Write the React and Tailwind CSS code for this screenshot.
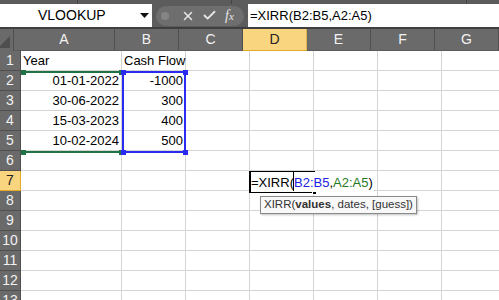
import { X, Check } from 'lucide-react';

const COLS = ['A', 'B', 'C', 'D', 'E', 'F', 'G'];
const COL_W = [101, 64, 64, 64, 64, 64, 64];

const DATA = {
  1: { A: { v: 'Year' }, B: { v: 'Cash Flow' } },
  2: { A: { v: '01-01-2022', right: true }, B: { v: '-1000', right: true } },
  3: { A: { v: '30-06-2022', right: true }, B: { v: '300', right: true } },
  4: { A: { v: '15-03-2023', right: true }, B: { v: '400', right: true } },
  5: { A: { v: '10-02-2024', right: true }, B: { v: '500', right: true } },
};

const ROWS = Array.from({ length: 13 }, (_, i) => i + 1);

function Corner({ color, x, y }) {
  return <div className={`absolute h-[5px] w-[5px] ${color}`} style={{ left: x - 2, top: y - 2 }} />;
}

export default function App() {
  return (
    <div
      className="relative h-[300px] w-[499px] overflow-hidden bg-white text-[13px] text-black"
      style={{ fontFamily: '"Liberation Sans", Arial, sans-serif' }}
    >
      {/* ribbon edge */}
      <div className="flex h-[4px] bg-[#5c5c5c]">
        <div className="w-[78px] border-r border-[#444]" />
        <div className="w-[154px] border-r border-[#444]" />
        <div className="w-[235px] border-r border-[#444]" />
      </div>

      {/* formula bar */}
      <div className="flex h-[23px] bg-[#5c5c5c]">
        <div className="flex w-[152px] items-center bg-white pl-[38px] pr-[2px]">
          <span className="flex-1 text-[14px]">VLOOKUP</span>
          <svg width="9" height="5" viewBox="0 0 9 5" className="mr-[1px]">
            <path d="M0 0h9L4.5 5z" fill="#111" />
          </svg>
        </div>
        <div className="flex flex-1 items-center">
          <div className="ml-[4px] flex h-[20px] w-[88px] items-center rounded-full bg-[#6e6e6e] pl-[5px]">
            <div className="h-[8px] w-[8px] rounded-full bg-[#858585]" />
            <X className="ml-[12px] h-[14px] w-[14px] text-[#e6e6e6]" strokeWidth={2.5} />
            <Check className="ml-[7px] h-[15px] w-[15px] text-[#e6e6e6]" strokeWidth={3} />
            <span
              className="ml-[8px] text-[14px] italic text-[#e6e6e6]"
              style={{ fontFamily: '"Liberation Serif", serif' }}
            >
              f<span className="text-[11px]">x</span>
            </span>
          </div>
        </div>
        <div className="flex w-[251px] items-center bg-white pl-[2px]">
          <span>=XIRR(B2:B5,A2:A5)</span>
        </div>
      </div>
      <div className="h-[2px] bg-[#3f3f3f]" />

      {/* column headers */}
      <div className="flex h-[22px] bg-[#6a6a6a] text-[14px] text-[#f2f2f2]">
        <div className="relative w-[21px] border-r border-[#4f4f4f]">
          <svg width="12" height="12" viewBox="0 0 12 12" className="absolute bottom-[3px] right-[3px]">
            <path d="M12 0V12H0z" fill="#4e4e4e" />
          </svg>
        </div>
        {COLS.map((c, i) => (
          <div
            key={c}
            className={`flex shrink-0 items-center justify-center border-r border-b ${
              c === 'D'
                ? 'border-[#e1b34f] border-b-[#e3a92b] bg-[#fad57f] text-[#222]'
                : 'border-[#4f4f4f] border-b-[#5a5a5a]'
            }`}
            style={{ width: COL_W[i] }}
          >
            {c}
          </div>
        ))}
      </div>

      {/* rows */}
      {ROWS.map((r) => (
        <div key={r} className="flex h-[20px]">
          <div
            className={`flex w-[21px] shrink-0 items-center justify-center border-r border-b text-[14px] ${
              r === 7
                ? 'border-[#e3a92b] bg-[#fad57f] text-[#222]'
                : 'border-[#4f4f4f] bg-[#6a6a6a] text-[#f2f2f2]'
            }`}
          >
            {r}
          </div>
          {COLS.map((c, i) => {
            const cell = DATA[r]?.[c];
            return (
              <div
                key={c}
                className={`flex shrink-0 items-center overflow-visible whitespace-nowrap border-r border-b border-[#d4d4d4] px-[2px] pt-[1px] ${
                  cell?.right ? 'justify-end' : 'justify-start'
                }`}
                style={{ width: COL_W[i] }}
              >
                {cell?.v}
              </div>
            );
          })}
        </div>
      ))}

      {/* A2:A5 green range */}
      <div className="absolute left-[22px] top-[71px] h-[2px] w-[100px] bg-[#217346]" />
      <div className="absolute left-[22px] top-[151px] h-[2px] w-[100px] bg-[#217346]" />
      <Corner color="bg-[#217346]" x={23} y={72} />
      <Corner color="bg-[#217346]" x={23} y={152} />
      <Corner color="bg-[#217346]" x={121} y={72} />
      <Corner color="bg-[#217346]" x={121} y={152} />

      {/* B2:B5 blue range */}
      <div className="absolute left-[122px] top-[71px] h-[82px] w-[64px] border-2 border-[#2a2af0]" />
      <Corner color="bg-[#2a2af0]" x={123} y={72} />
      <Corner color="bg-[#2a2af0]" x={185} y={72} />
      <Corner color="bg-[#2a2af0]" x={123} y={152} />
      <Corner color="bg-[#2a2af0]" x={185} y={152} />

      {/* active cell D7 */}
      <div className="absolute left-[249px] top-[171px] h-[22px] w-[66px] border-2 border-black" />
      <div className="absolute left-[312px] top-[190px] h-[5px] w-[5px] border border-white bg-black" />
      <div className="absolute left-[251px] top-[172px] flex h-[20px] items-center whitespace-nowrap bg-white pr-[1px] pt-[1px]">
        <span>=XIRR(</span>
        <span className="relative text-[#2020e0]">
          <span className="absolute left-[-1px] top-[-2px] h-[20px] w-[1px] bg-black" />
          B2:B5
        </span>
        <span>,</span>
        <span className="text-[#1f7a1f]">A2:A5</span>
        <span>)</span>
      </div>

      {/* function tooltip */}
      <div className="absolute left-[260px] top-[196px] flex h-[18px] items-center border border-[#8a8a8a] bg-[#f8f8f8] px-[3px] text-[11.5px] text-[#333] shadow-[1px_1px_2px_rgba(0,0,0,0.25)]">
        XIRR(<b>values</b>, dates, [guess])
      </div>
    </div>
  );
}
